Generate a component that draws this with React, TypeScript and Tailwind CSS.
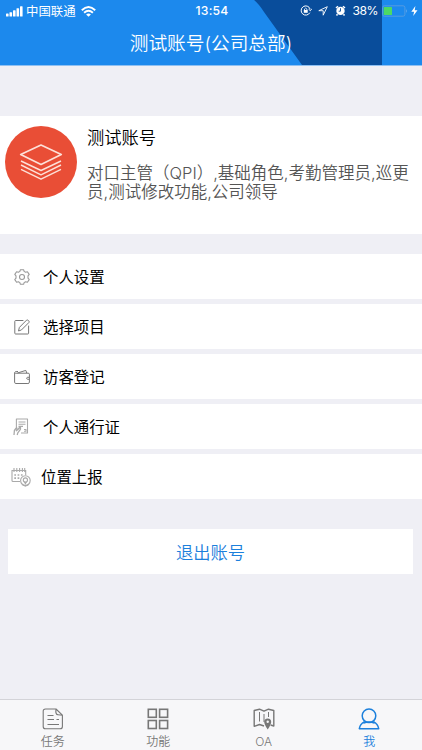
import React, { useState } from 'react';

interface IconProps {
  className?: string;
}

const GearIcon = ({ className }: IconProps) => (
  <svg className={className} viewBox="0 0 16 16" fill="none" stroke="currentColor" strokeWidth="1.1" strokeLinejoin="round">
    <path d="M5.9 2.4 6.3.8H9.7L10.1 2.4 11.6 3.3 13.4 2.8 15.2 5.4 14 6.9V9.1L15.2 10.6 13.4 13.2 11.6 12.7 10.1 13.6 9.7 15.2H6.3L5.9 13.6 4.4 12.7 2.6 13.2.8 10.6 2 9.1V6.9L.8 5.4 2.6 2.8 4.4 3.3Z" />
    <circle cx="8" cy="8" r="2.5" />
  </svg>
);

const EditIcon = ({ className }: IconProps) => (
  <svg className={className} viewBox="0 0 16 16" fill="none" stroke="currentColor" strokeWidth="1" strokeLinejoin="round" strokeLinecap="round">
    <path d="M9 1.5H1.6Q.8 1.5.8 2.3V14.2Q.8 15 1.6 15H13.8Q14.6 15 14.6 14.2V7" />
    <path d="M4.6 11.6 5.4 8.4 12.5 1.2Q13.3.5 14.5 1.6Q15.6 2.7 14.9 3.5L7.7 10.7Z" />
  </svg>
);

const WalletIcon = ({ className }: IconProps) => (
  <svg className={className} viewBox="0 0 16 16" fill="none" stroke="currentColor" strokeWidth="1" strokeLinejoin="round">
    <path d="M.6 3.8V13.2Q.6 14.5 1.9 14.5H13.9Q15.4 14.5 15.4 13.2V5.2Q15.4 4.2 14.1 4.2H1.3Q.6 4.1.6 3.3 M1 3.2 Q1.2 2.5 2.2 2.5H4 M3.5 4 11.8 1.4 12.8 4.1" />
    <path d="M15.3 8.3H13.6Q12.7 8.4 12.7 9.3T13.6 10.3H15.3" />
  </svg>
);

const PassIcon = ({ className }: IconProps) => (
  <svg className={className} viewBox="0 0 16 18" fill="none" stroke="currentColor" strokeWidth="1.1" strokeLinejoin="round">
    <path d="M3.4 9V1H14.5V15H8" />
    <path d="M5.5 4H12.5M5.5 6.2H12.5M5.5 8.4H10" />
    <path d="M1 17 1.4 12.5 3.6 9.5 4 11.6 3.2 13.2 M4.2 17 4.8 14.8 7.4 11.4 7.5 9.5 Q6.6 9 6.2 10L4.2 12.3" strokeWidth="1.3" />
    <path d="M11 11.5H13V13.3H11" />
  </svg>
);

const CalendarPinIcon = ({ className }: IconProps) => (
  <svg className={className} viewBox="0 0 20 20" fill="none" stroke="currentColor" strokeWidth="1.1">
    <path d="M9 14.5H2Q1 14.5 1 13.5V3.5H14.7V8 M3 1V5M5.8 1V5M8.6 1V5M11.4 1V5M13.7 1V5" />
    <path d="M3.3 8H12M3.3 11.2H9" strokeWidth="1.7" strokeDasharray="1.7 1.6" />
    <circle cx="14.4" cy="13.6" r="4.8" />
    <circle cx="14.4" cy="13" r="2.1" />
    <path d="M13.3 14.8 14.4 16.6 15.5 14.8M11 17.6 14.4 19.2 17.8 17.6" />
  </svg>
);

const TaskIcon = ({ className }: IconProps) => (
  <svg className={className} viewBox="0 0 22 22" fill="none" stroke="currentColor" strokeWidth="1.1" strokeLinejoin="round">
    <path d="M14 1H3.5Q1.2 1 1.2 3.3V18.5Q1.2 20.8 3.5 20.8H18.2Q20.4 20.8 20.4 18.5V7.2Z M14 1Q13.2 6.5 16 6.8L20.4 7.2" />
    <path d="M5.5 7.5H11.5M5.5 11.5H12M5.5 16.5H17M14.5 11.5H17" />
  </svg>
);

const GridIcon = ({ className }: IconProps) => (
  <svg className={className} viewBox="0 0 22 22" fill="none" stroke="currentColor" strokeWidth="1.6">
    <rect x="1.3" y="1.3" width="8" height="8" />
    <rect x="12.6" y="1.3" width="8" height="8" />
    <rect x="1.3" y="12.5" width="8" height="8" />
    <rect x="12.6" y="12.5" width="8" height="8" />
  </svg>
);

const MapIcon = ({ className }: IconProps) => (
  <svg className={className} viewBox="0 0 22 22" fill="none" stroke="currentColor" strokeWidth="1.4" strokeLinejoin="round">
    <path d="M11 18 6.5 16.5 1.2 18.3V2.5L6.5 1.2 11 3.2 15.5 1.2 20.8 2.5V18L17.6 17" />
    <path d="M6.5 4V13.5M11 6V14M15.5 4V9" strokeWidth="1" />
    <path d="M14.7 21.5Q11.2 16.3 11.2 13.9A3.5 3.5 0 0 1 18.2 13.9Q18.2 16.3 14.7 21.5Z" fill="currentColor" stroke="none" />
    <circle cx="14.7" cy="13.8" r="1.2" fill="#f7f7f9" stroke="none" />
  </svg>
);

const PersonIcon = ({ className }: IconProps) => (
  <svg className={className} viewBox="0 0 22 22" fill="none" stroke="currentColor" strokeWidth="1.5" strokeLinejoin="round">
    <circle cx="11" cy="7.8" r="6.8" />
    <path d="M6.5 13.6Q2 16 1.3 20.7H20.7Q20 16 15.5 13.6M5.6 15.1Q11 12.9 16.4 15.1" />
  </svg>
);

const menuItems = [
  { label: '个人设置', icon: GearIcon, iconClass: 'ml-3.5 h-4 w-4 text-[#999]', gap: 'ml-[13px]' },
  { label: '选择项目', icon: EditIcon, iconClass: 'ml-3.5 h-4 w-4 text-[#777]', gap: 'ml-[13px]' },
  { label: '访客登记', icon: WalletIcon, iconClass: 'ml-3.5 h-4 w-4 text-[#777]', gap: 'ml-[13px]' },
  { label: '个人通行证', icon: PassIcon, iconClass: 'ml-[13px] h-[18px] w-4 text-[#aaa]', gap: 'ml-3.5' },
  { label: '位置上报', icon: CalendarPinIcon, iconClass: 'ml-[11px] h-5 w-5 text-[#aaa]', gap: 'ml-2.5' }
];

const tabs = [
  { label: '任务', icon: TaskIcon },
  { label: '功能', icon: GridIcon },
  { label: 'OA', icon: MapIcon },
  { label: '我', icon: PersonIcon }
];

const StatusBar = () => (
  <div className="relative grid h-[22px] grid-cols-[1fr_auto_1fr] items-center text-[12px] leading-none">
    <div className="flex items-center pl-1.5">
      <svg className="h-[11px] w-[17px]" viewBox="0 0 17 11" fill="currentColor">
        <rect x="0" y="7.5" width="2.6" height="3" rx="0.6" />
        <rect x="3.5" y="6.2" width="2.6" height="4.3" rx="0.6" />
        <rect x="7" y="4.2" width="2.6" height="6.3" rx="0.6" />
        <rect x="10.5" y="2.2" width="2.6" height="8.3" rx="0.6" />
        <rect x="14" y="0.2" width="2.6" height="10.3" rx="0.6" />
      </svg>
      <span className="ml-[3px] pt-0.5 text-[12.4px]">中国联通</span>
      <svg className="ml-[5px] h-[11px] w-[15px]" viewBox="0 0 15 11" fill="none" stroke="currentColor" strokeWidth="1.9">
        <path d="M.8 4.2Q7.5-2.2 14.2 4.2M3.1 6.7Q7.5 2.6 11.9 6.7" />
        <path d="M7.5 10.8 5.1 8.4Q7.5 6.4 9.9 8.4Z" fill="currentColor" stroke="none" />
      </svg>
    </div>
    <span className="pl-0.5 text-[12.2px] font-medium tracking-[0.2px]">13:54</span>
    <div className="flex items-center justify-end pr-1">
      <svg className="h-[11px] w-3" viewBox="0 0 12 11" fill="none" stroke="currentColor" strokeWidth="1">
        <path d="M9.8 7.7A4.6 4.6 0 1 1 10.1 4M8.6 4.2 10.4 5.7 11.7 3.8" />
        <rect x="3.8" y="5" width="3.9" height="2.8" fill="currentColor" stroke="none" />
        <path d="M4.5 5V4Q5.7 2.1 6.9 4V5" strokeWidth="0.8" />
      </svg>
      <svg className="ml-1.5 h-2.5 w-2.5" viewBox="0 0 10 10" fill="none" stroke="currentColor" strokeWidth="0.9" strokeLinejoin="round">
        <path d="M9.3.7.8 4.7H5.2V9.2Z" />
      </svg>
      <svg className="ml-[7px] h-[11px] w-[11px]" viewBox="0 0 11 11">
        <circle cx="5.5" cy="5.9" r="4.2" fill="currentColor" />
        <path d="M1 3 3 1.2M10 3 8 1.2M2.5 9.2 1.5 10.5M8.5 9.2 9.5 10.5" stroke="currentColor" strokeWidth="1.5" />
        <path d="M5.5 3.2V6.2H3.7" stroke="#094d9b" strokeWidth="0.9" fill="none" />
      </svg>
      <span className="ml-1.5 text-[12.2px] tracking-[-0.5px]">38%</span>
      <svg className="ml-1 h-3 w-[26px]" viewBox="0 0 26 12" fill="none">
        <rect x="0.5" y="0.8" width="22.4" height="10.4" rx="1.8" stroke="#5b9ee0" strokeWidth="0.9" />
        <rect x="1.7" y="2" width="8.3" height="8" rx="0.6" fill="#4cd964" />
        <path d="M24.4 4V8Q25.6 6 24.4 4Z" fill="#8bbced" />
      </svg>
      <svg className="ml-[3px] h-2.5 w-[7px]" viewBox="0 0 7 10" fill="currentColor">
        <path d="M4.4 0 .3 5.8H3.1L2.2 10 6.5 4.2H3.7Z" />
      </svg>
    </div>
  </div>
);

const App: React.FC = () => {
  const [activeTab, setActiveTab] = useState('我');

  return (
    <div className="flex h-[750px] w-[422px] flex-col overflow-hidden bg-[#efeff5] font-['Inter','Noto_Sans_CJK_SC',sans-serif] text-black">
      {/* Header */}
      <header className="relative h-[66px] shrink-0 border-b border-[#8fc0f2] bg-[#1c89ed] text-white">
        <svg className="absolute top-0 left-0 h-[65px] w-[422px]" viewBox="0 0 422 65">
          <path d="M254 0Q259 4 264 12L302 65H382V0Z" fill="#094d9b" />
        </svg>
        <StatusBar />
        <h1 className="relative flex h-[43px] items-center justify-center pt-px text-[18.7px] leading-none font-[350]">
          测试账号(公司总部)
        </h1>
      </header>

      {/* Profile */}
      <section className="mt-[50px] flex h-[118px] shrink-0 bg-white pl-[5px]">
        <div className="mt-2.5 flex h-[72px] w-[72px] shrink-0 items-center justify-center rounded-full bg-[#e94e36]">
          <svg className="h-[38px] w-[44px]" viewBox="0 0 44 38" fill="none" stroke="#fde0d8" strokeWidth="1.7" strokeLinejoin="round">
            <path d="M22 2 42.3 11.5 22 21.5 1.7 11.5Z" />
            <path d="M2 18 22 27.5 42 18M2 22 22 31.8 42 22M2 26.3 22 36.2 42 26.3" strokeWidth="1.4" />
          </svg>
        </div>
        <div className="ml-2.5 flex-1">
          <h2 className="mt-[11px] text-[17.3px] leading-[22px] font-[350]">测试账号</h2>
          <p className="mt-[14.5px] w-[326px] text-[16.5px] leading-[19.5px] font-[350] whitespace-nowrap text-[#555]">
            对口主管（QPI）,基础角色,考勤管理员,巡更
            <br />
            员,测试修改功能,公司领导
          </p>
        </div>
      </section>

      {/* Menu */}
      <nav className="mt-5 flex shrink-0 flex-col gap-[5px]">
        {menuItems.map(({ label, icon: Icon, iconClass, gap }) => (
          <button key={label} className="flex h-[45px] w-full items-center bg-white text-left text-[15.4px] leading-none">
            <Icon className={`shrink-0 ${iconClass}`} />
            <span className={`pt-0.5 ${gap}`}>{label}</span>
          </button>
        ))}
      </nav>

      <button className="mt-[30px] ml-2 h-[45px] w-[405px] shrink-0 bg-white pt-0.5 text-[17.3px] leading-none font-[350] text-[#1c80dc]">
        退出账号
      </button>

      {/* Tab bar */}
      <footer className="mt-auto grid h-[51px] shrink-0 grid-cols-4 border-t border-[#d3d3d8] bg-[#f7f7f9]">
        {tabs.map(({ label, icon: Icon }) => (
          <button
            key={label}
            onClick={() => setActiveTab(label)}
            className={`flex flex-col items-center pt-2 text-[12px] leading-none ${
              activeTab === label ? 'text-[#1c80dc]' : 'text-[#777]'
            }`}
          >
            <Icon className="h-[22px] w-[22px]" />
            <span className="mt-1.5 font-[350]">{label}</span>
          </button>
        ))}
      </footer>
    </div>
  );
};

export default App;
